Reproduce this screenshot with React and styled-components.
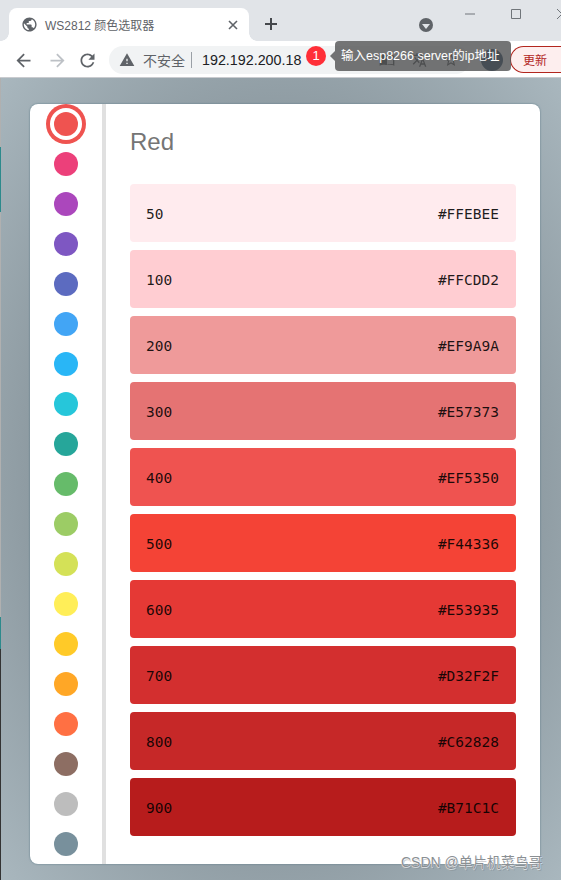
import React from "react";
import styled, { createGlobalStyle } from "styled-components";

const SHADES = [
  { name: "50", hex: "#FFEBEE" },
  { name: "100", hex: "#FFCDD2" },
  { name: "200", hex: "#EF9A9A" },
  { name: "300", hex: "#E57373" },
  { name: "400", hex: "#EF5350" },
  { name: "500", hex: "#F44336" },
  { name: "600", hex: "#E53935" },
  { name: "700", hex: "#D32F2F" },
  { name: "800", hex: "#C62828" },
  { name: "900", hex: "#B71C1C" },
];

const DOTS = [
  "#EF5350", "#EC407A", "#AB47BC", "#7E57C2", "#5C6BC0", "#42A5F5", "#29B6F6",
  "#26C6DA", "#26A69A", "#66BB6A", "#9CCC65", "#D4E157", "#FFEE58", "#FFCA28",
  "#FFA726", "#FF7043", "#8D6E63", "#BDBDBD", "#78909C",
];

const Icon = ({ d, size = 24, color = "#5f6368" }) => (
  <svg width={size} height={size} viewBox="0 0 24 24" fill={color}>
    <path d={d} />
  </svg>
);

const BACK = "M20 11H7.83l5.59-5.59L12 4l-8 8 8 8 1.41-1.41L7.83 13H20v-2z";
const FORWARD = "M4 11h12.17l-5.59-5.59L12 4l8 8-8 8-1.41-1.41L16.17 13H4v-2z";
const RELOAD =
  "M17.65 6.35C16.2 4.9 14.21 4 12 4c-4.42 0-7.99 3.58-7.99 8s3.57 8 7.99 8c3.73 0 6.84-2.55 7.73-6h-2.08c-.82 2.33-3.04 4-5.65 4-3.31 0-6-2.69-6-6s2.69-6 6-6c1.66 0 3.14.69 4.22 1.78L13 11h7V4l-2.35 2.35z";
const WARNING = "M1 21h22L12 2 1 21zm12-3h-2v-2h2v2zm0-4h-2v-4h2v4z";
const GLOBE =
  "M12 2C6.48 2 2 6.48 2 12s4.48 10 10 10 10-4.48 10-10S17.52 2 12 2zm-1 17.93c-3.95-.49-7-3.85-7-7.93 0-.62.08-1.21.21-1.79L9 15v1c0 1.1.9 2 2 2v1.93zm6.9-2.54c-.26-.81-1-1.39-1.9-1.39h-1v-3c0-.55-.45-1-1-1H8v-2h2c.55 0 1-.45 1-1V7h2c1.1 0 2-.9 2-2v-.41c2.93 1.19 5 4.06 5 7.41 0 2.08-.8 3.97-2.1 5.39z";
const BOOK =
  "M21 5c-1.11-.35-2.33-.5-3.5-.5-1.95 0-4.05.4-5.5 1.5-1.45-1.1-3.55-1.5-5.5-1.5S2.45 4.9 1 6v14.65c2.5-1.6 6-2 9-1.2.7.2 1.4.2 2 .2s1.3 0 2-.2c3-.8 6.5-.4 9 1.2V6c-.6-.45-1.25-.75-2-1zm0 13.5c-2.6-.9-6.5-.9-9 .5V8c2.5-1.4 6.4-1.4 9-.5v11z";
const TRANSLATE =
  "M12.87 15.07l-2.54-2.51.03-.03c1.74-1.94 2.98-4.17 3.71-6.53H17V4h-7V2H8v2H1v1.99h11.17C11.5 7.92 10.44 9.75 9 11.35 8.07 10.32 7.3 9.19 6.69 8h-2c.73 1.63 1.73 3.17 2.98 4.56l-5.09 5.02L4 19l5-5 3.11 3.11.76-2.04zM18.5 10h-2L12 22h2l1.12-3h4.75L21 22h2l-4.5-12zm-2.62 7l1.62-4.33L19.12 17h-3.24z";
const STAR =
  "M22 9.24l-7.19-.62L12 2 9.19 8.63 2 9.24l5.46 4.73L5.82 21 12 17.27 18.18 21l-1.63-7.03L22 9.24zM12 15.4l-3.76 2.27 1-4.28-3.32-2.88 4.38-.38L12 6.1l1.71 4.04 4.38.38-3.32 2.88 1 4.28L12 15.4z";

const GlobalStyle = createGlobalStyle`
  html, body {
    margin: 0;
    padding: 0;
    background: #fff;
  }
`;

const Window = styled.div`
  position: relative;
  width: 561px;
  height: 880px;
  overflow: hidden;
  display: flex;
  flex-direction: column;
  font-family: "Liberation Sans", "Noto Sans CJK SC", sans-serif;
`;

const TabBar = styled.div`
  height: 41px;
  flex: none;
  display: flex;
  align-items: flex-end;
  padding-left: 9px;
  background: #e1e4e8;
`;

const Tab = styled.div`
  position: relative;
  flex: none;
  width: 240px;
  height: 33px;
  box-sizing: border-box;
  display: flex;
  align-items: center;
  gap: 7px;
  padding: 0 11px 0 12px;
  background: #fff;
  border-radius: 8px 8px 0 0;
  &::before,
  &::after {
    content: "";
    position: absolute;
    bottom: 0;
    width: 8px;
    height: 8px;
  }
  &::before {
    left: -8px;
    background: radial-gradient(circle at 0 0, transparent 7.5px, #fff 8px);
  }
  &::after {
    right: -8px;
    background: radial-gradient(circle at 100% 0, transparent 7.5px, #fff 8px);
  }
`;

const TabTitle = styled.span`
  flex: 1;
  font-size: 12px;
  color: #5f6368;
  white-space: nowrap;
`;

const TabClose = styled.svg`
  width: 10px;
  height: 10px;
  stroke: #5f6368;
  stroke-width: 1.6;
`;

const NewTab = styled.svg`
  flex: none;
  width: 14px;
  height: 14px;
  margin: 0 0 10px 15px;
  stroke: #45484c;
  stroke-width: 2;
`;

const TabSearch = styled.div`
  flex: none;
  width: 14px;
  height: 14px;
  margin: 0 0 9px 141px;
  border-radius: 50%;
  background: #5f6368;
  display: flex;
  align-items: center;
  justify-content: center;
  &::after {
    content: "";
    margin-top: 2px;
    border-left: 4px solid transparent;
    border-right: 4px solid transparent;
    border-top: 5px solid #e1e4e8;
  }
`;

const WindowControls = styled.div`
  display: flex;
  align-items: center;
  gap: 36px;
  align-self: flex-start;
  height: 28px;
  margin-left: 32px;
`;

const ControlIcon = styled.svg`
  width: 10px;
  height: 10px;
  flex: none;
  stroke: #70757a;
  stroke-width: 1;
  fill: none;
`;

const Toolbar = styled.div`
  height: 37px;
  flex: none;
  box-sizing: border-box;
  display: flex;
  align-items: flex-start;
  padding-top: 5px;
  background: #fff;
  border-bottom: 1px solid #c9cbcf;
`;

const NavButton = styled.div`
  flex: none;
  width: ${(p) => p.$width}px;
  height: 28px;
  display: flex;
  align-items: center;
  justify-content: center;
`;

const Omnibox = styled.div`
  width: 361px;
  height: 28px;
  margin-left: 3px;
  flex: none;
  box-sizing: border-box;
  display: flex;
  align-items: center;
  padding-left: 10px;
  border-radius: 14px;
  background: #f1f3f4;
`;

const SecurityLabel = styled.span`
  margin-left: 8px;
  font-size: 14px;
  color: #5f6368;
  white-space: nowrap;
`;

const Divider = styled.span`
  width: 1px;
  height: 16px;
  margin: 0 10px 0 6px;
  background: #9aa0a6;
`;

const Url = styled.span`
  font-size: 14.3px;
  color: #202124;
  white-space: nowrap;
`;

const OmniIcons = styled.div`
  flex: none;
  margin-left: 78px;
  display: flex;
  gap: 16px;
`;

const Avatar = styled.div`
  width: 22px;
  height: 22px;
  margin: 3px 0 0 11px;
  flex: none;
  border-radius: 50%;
  background: #06294b;
`;

const UpdateButton = styled.div`
  flex: none;
  height: 27px;
  width: 70px;
  margin-left: 7px;
  box-sizing: border-box;
  padding-left: 12px;
  display: flex;
  align-items: center;
  font-size: 12px;
  color: #b3261e;
  border: 1px solid #b3261e;
  border-right: none;
  border-radius: 14px 0 0 14px;
  background: #fdeeee;
`;

const Badge = styled.div`
  position: absolute;
  left: 306px;
  top: 46px;
  width: 20px;
  height: 20px;
  border-radius: 50%;
  background: #ff2f38;
  color: #fff;
  font-size: 13px;
  line-height: 20px;
  text-align: center;
`;

const Tooltip = styled.div`
  position: absolute;
  left: 335px;
  top: 41px;
  width: 176px;
  height: 30px;
  box-sizing: border-box;
  padding-left: 6px;
  border-radius: 4px;
  background: rgba(84, 85, 87, 0.82);
  color: #fff;
  font-size: 12.5px;
  line-height: 30px;
  white-space: nowrap;
  &::before {
    content: "";
    position: absolute;
    left: -5px;
    top: 10px;
    border-top: 5px solid transparent;
    border-bottom: 5px solid transparent;
    border-right: 5px solid rgba(84, 85, 87, 0.82);
  }
`;

const Page = styled.div`
  flex: 1;
  box-sizing: border-box;
  padding: 26px 21px 16px 30px;
  display: flex;
  background: radial-gradient(
    farthest-corner at 50% 50%,
    #7c8a92 0%,
    #8d9aa1 62%,
    #a9b7be 100%
  );
`;

const Card = styled.div`
  flex: 1;
  display: flex;
  overflow: hidden;
  background: #fff;
  border-radius: 8px;
  box-shadow: 0 0 2px #557482;
`;

const Palette = styled.div`
  width: 72px;
  flex: none;
  display: flex;
  flex-direction: column;
  align-items: center;
  gap: 16px;
  padding-top: 8px;
  border-right: 4px solid #e0e0e0;
`;

const Dot = styled.div`
  position: relative;
  width: 24px;
  height: 24px;
  flex: none;
  border-radius: 50%;
  background: ${(p) => p.$color};
  ${(p) => p.$selected && `box-shadow: 0 0 0 4px #fff, 0 0 0 8px ${p.$color};`}
`;

const Content = styled.div`
  flex: 1;
  display: flex;
  flex-direction: column;
  padding: 0 24px;
`;

const Title = styled.h1`
  margin: 24px 0 28px;
  height: 28px;
  font-size: 24px;
  line-height: 28px;
  font-weight: 400;
  color: #757575;
`;

const ShadeList = styled.div`
  display: flex;
  flex-direction: column;
  gap: 8px;
`;

const ShadeRow = styled.div`
  height: 58px;
  box-sizing: border-box;
  padding: 2px 17px 0 16px;
  display: flex;
  align-items: center;
  justify-content: space-between;
  border-radius: 4px;
  background: ${(p) => p.$color};
  color: rgba(0, 0, 0, 0.88);
  font-family: "DejaVu Sans Mono", monospace;
  font-size: 14.5px;
`;

const EdgeStrip = styled.div`
  position: absolute;
  left: 0;
  top: 78px;
  bottom: 0;
  width: 1px;
  background: linear-gradient(
    180deg,
    #b0b0b0 0 69px,
    #2c8a8c 69px 134px,
    #b0b0b0 134px 539px,
    #2c8a8c 539px 571px,
    #333 571px
  );
`;

const Watermark = styled.div`
  position: absolute;
  left: 401px;
  top: 851px;
  font-size: 14px;
  color: #8a8f93;
  white-space: nowrap;
  text-shadow: 0 0 1px #fff, 0 1px 1px rgba(255, 255, 255, 0.7), 1px 2px 0 rgba(110, 115, 120, 0.35);
`;

export default function App() {
  return (
    <Window>
      <GlobalStyle />
      <TabBar>
        <Tab>
          <Icon d={GLOBE} size={17} />
          <TabTitle>WS2812 颜色选取器</TabTitle>
          <TabClose viewBox="0 0 10 10">
            <path d="M1 1l8 8M9 1l-8 8" />
          </TabClose>
        </Tab>
        <NewTab viewBox="0 0 14 14">
          <path d="M7 1v12M1 7h12" />
        </NewTab>
        <TabSearch />
        <WindowControls>
          <ControlIcon viewBox="0 0 10 10">
            <path d="M0 5h10" />
          </ControlIcon>
          <ControlIcon viewBox="0 0 10 10">
            <path d="M.5.5h9v9h-9z" />
          </ControlIcon>
          <ControlIcon viewBox="0 0 10 10">
            <path d="M0 0l10 10M10 0L0 10" />
          </ControlIcon>
        </WindowControls>
      </TabBar>

      <Toolbar>
        <NavButton $width={46}>
          <Icon d={BACK} size={21} />
        </NavButton>
        <NavButton $width={22}>
          <Icon d={FORWARD} size={21} color="#bdc1c6" />
        </NavButton>
        <NavButton $width={38}>
          <Icon d={RELOAD} size={21} />
        </NavButton>
        <Omnibox>
          <Icon d={WARNING} size={16} />
          <SecurityLabel>不安全</SecurityLabel>
          <Divider />
          <Url>192.192.200.18</Url>
          <OmniIcons>
            <Icon d={BOOK} size={16} color="#2b2c2e" />
            <Icon d={TRANSLATE} size={16} color="#2b2c2e" />
            <Icon d={STAR} size={16} color="#2b2c2e" />
          </OmniIcons>
        </Omnibox>
        <Avatar />
        <UpdateButton>更新</UpdateButton>
      </Toolbar>

      <Page>
        <Card>
          <Palette>
            {DOTS.map((color, i) => (
              <Dot key={color} $color={color} $selected={i === 0} />
            ))}
          </Palette>
          <Content>
            <Title>Red</Title>
            <ShadeList>
              {SHADES.map((shade) => (
                <ShadeRow key={shade.name} $color={shade.hex}>
                  <span>{shade.name}</span>
                  <span>{shade.hex}</span>
                </ShadeRow>
              ))}
            </ShadeList>
          </Content>
        </Card>
      </Page>

      <Badge>1</Badge>
      <Tooltip>输入esp8266 server的ip地址</Tooltip>
      <EdgeStrip />
      <Watermark>CSDN @单片机菜鸟哥</Watermark>
    </Window>
  );
}
